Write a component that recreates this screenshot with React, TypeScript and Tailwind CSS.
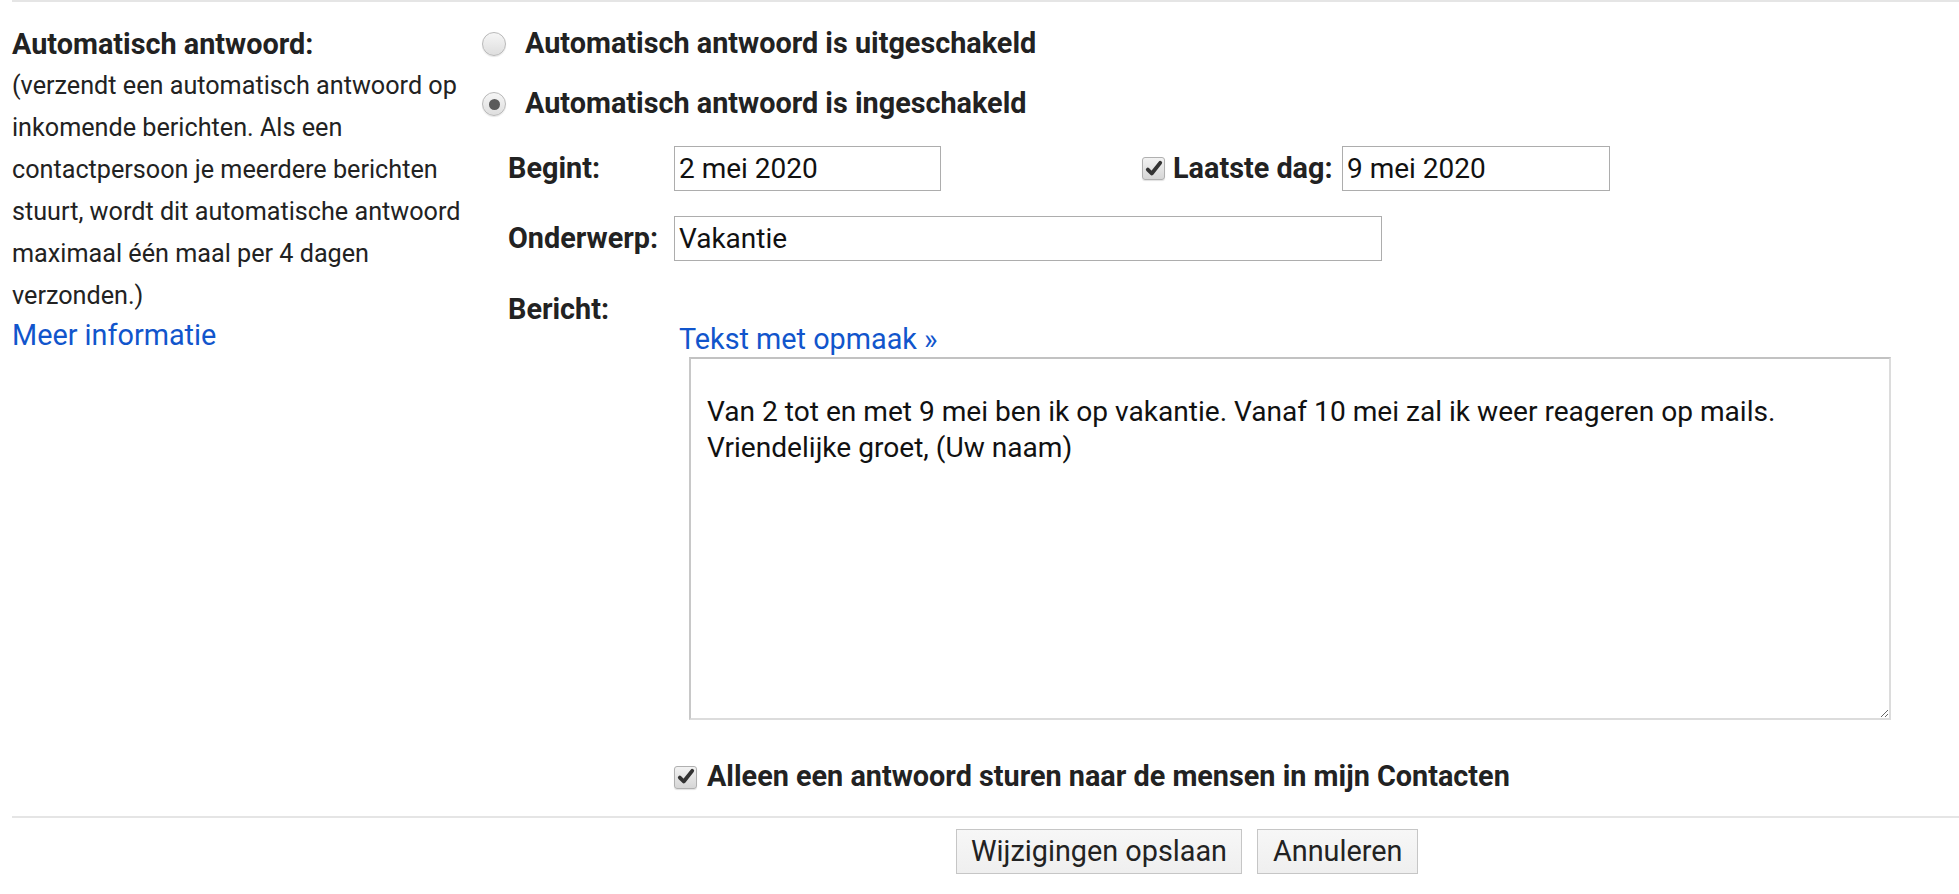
import React from "react";

function Radio({ checked }: { checked?: boolean }) {
  return (
    <div className="w-[24px] h-[24px] rounded-full border border-[#b9b9b9] bg-gradient-to-b from-[#f6f6f6] to-[#dedede] shadow-[0_1px_1px_rgba(0,0,0,0.1)] flex items-center justify-center shrink-0">
      {checked && <div className="w-[11px] h-[11px] rounded-full bg-[#5a5a5a]" />}
    </div>
  );
}

function Check() {
  return (
    <div className="w-[23px] h-[23px] rounded-[3px] border border-[#b0b0b0] bg-gradient-to-b from-[#f2f2f2] to-[#d6d6d6] shadow-[0_1px_1px_rgba(0,0,0,0.12)] flex items-center justify-center shrink-0">
      <svg width="18" height="18" viewBox="0 0 16 16">
        <path d="M2.5 8.5 L6 12 L13.5 2.5" fill="none" stroke="#333" strokeWidth="3.4" strokeLinecap="round" strokeLinejoin="round" />
      </svg>
    </div>
  );
}

export default function App() {
  const font = { fontFamily: "Roboto, 'Liberation Sans', Arial, sans-serif" };
  return (
    <div className="w-[1959px] h-[894px] bg-white text-[#222] overflow-hidden" style={font}>
      <div className="pl-[12px]">
        <div className="border-t-2 border-[#e5e5e5] flex">
          {/* left column */}
          <div className="w-[470px] shrink-0 pt-[21px]">
            <div className="text-[28.8px] leading-[42px] font-bold">Automatisch antwoord:</div>
            <div className="text-[25.2px] leading-[42px] whitespace-nowrap">
              (verzendt een automatisch antwoord op<br />
              inkomende berichten. Als een<br />
              contactpersoon je meerdere berichten<br />
              stuurt, wordt dit automatische antwoord<br />
              maximaal één maal per 4 dagen<br />
              verzonden.)
            </div>
            <div className="text-[28.8px] leading-[36px] text-[#1155cc]">Meer informatie</div>
          </div>

          {/* right column */}
          <div className="flex-1 pt-[12px]">
            <div className="h-[60px] flex items-center gap-[19px]">
              <Radio />
              <span className="text-[28.8px] font-bold">Automatisch antwoord is uitgeschakeld</span>
            </div>
            <div className="h-[60px] flex items-center gap-[19px]">
              <Radio checked />
              <span className="text-[28.8px] font-bold">Automatisch antwoord is ingeschakeld</span>
            </div>

            <div className="pl-[26px] mt-[12px]">
              <div className="flex items-center h-[45px]">
                <div className="w-[166px] text-[28.8px] font-bold">Begint:</div>
                <input
                  readOnly
                  defaultValue="2 mei 2020"
                  className="w-[267px] h-[45px] border border-[#adadad] px-[4px] text-[28px] text-[#111] outline-none"
                  style={font}
                />
                <div className="ml-[201px] flex items-center">
                  <Check />
                  <span className="ml-[8px] w-[169px] text-[28.8px] font-bold whitespace-nowrap">Laatste dag:</span>
                  <input
                    readOnly
                    defaultValue="9 mei 2020"
                    className="w-[268px] h-[45px] border border-[#adadad] px-[4px] text-[28px] text-[#111] outline-none"
                    style={font}
                  />
                </div>
              </div>

              <div className="flex items-center h-[45px] mt-[25px]">
                <div className="w-[166px] text-[28.8px] font-bold whitespace-nowrap">Onderwerp:</div>
                <input
                  readOnly
                  defaultValue="Vakantie"
                  className="w-[708px] h-[45px] border border-[#adadad] px-[4px] text-[28px] text-[#111] outline-none"
                  style={font}
                />
              </div>

              <div className="flex mt-[27px]">
                <div className="w-[166px] shrink-0 text-[28.8px] leading-[42px] font-bold">Bericht:</div>
                <div className="pt-[34px]">
                  <div className="ml-[5px] text-[28.8px] leading-[35px] text-[#1155cc]">Tekst met opmaak »</div>
                  <textarea
                    readOnly
                    defaultValue={"Van 2 tot en met 9 mei ben ik op vakantie. Vanaf 10 mei zal ik weer reageren op mails.\nVriendelijke groet, (Uw naam)"}
                    className="block ml-[15px] w-[1202px] h-[363px] border-2 border-t-[#c2c2c2] border-l-[#c8c8c8] border-r-[#dcdcdc] border-b-[#dcdcdc] pl-[16px] pt-[35px] text-[28.1px] leading-[36px] text-[#111] outline-none"
                    style={font}
                  />
                </div>
              </div>

              <div className="flex items-center h-[42px] mt-[36px] -ml-[26px] pl-[192px]">
                <Check />
                <span className="ml-[10px] text-[28.8px] font-bold">Alleen een antwoord sturen naar de mensen in mijn Contacten</span>
              </div>
            </div>
          </div>
        </div>

        <div className="mt-[18px] border-t-2 border-[#e5e5e5]" />

        <div className="flex gap-[15px] mt-[11px] pl-[944px]">
          <button className="h-[45px] px-[14px] border border-[#c6c6c6] bg-gradient-to-b from-[#f7f7f7] to-[#efefef] text-[28.8px] text-[#222]" style={font}>
            Wijzigingen opslaan
          </button>
          <button className="h-[45px] px-[15px] border border-[#c6c6c6] bg-gradient-to-b from-[#f7f7f7] to-[#efefef] text-[28.8px] text-[#222]" style={font}>
            Annuleren
          </button>
        </div>
      </div>
    </div>
  );
}
